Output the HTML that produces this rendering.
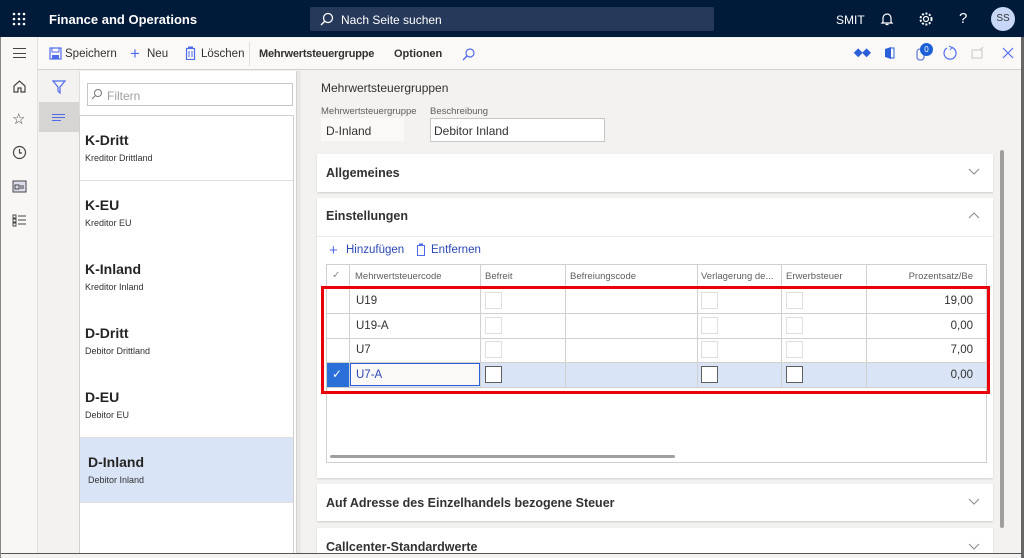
<!DOCTYPE html>
<html><head><meta charset="utf-8"><style>
*{box-sizing:border-box;margin:0;padding:0}
body{width:1024px;height:558px;overflow:hidden;font-family:"Liberation Sans",sans-serif;background:#f3f2f1;position:relative;color:#323130}
.a{position:absolute}
.top{left:0;top:0;width:1024px;height:37px;background:#001a3a}
.t{font-size:12px;white-space:nowrap}
.ab{font-size:11.5px;white-space:nowrap}
.card{background:#fff;box-shadow:0 1px 2px rgba(0,0,0,.15)}
.li{position:absolute;left:80px;width:213px;height:65px;border-bottom:1px solid #e1dfdd;background:#fff}
.li b{position:absolute;left:5px;top:16px;font-size:14px;font-weight:bold;color:#252423}
.li span{position:absolute;left:5px;top:37px;font-size:9px;color:#323130}
.cb{position:absolute;width:17px;height:17px;border:1px solid #e1dfdd;background:#fff}
.cb.s{border:1px solid #605e5c}
.hl{position:absolute;left:327px;width:659px;height:1px;background:#d2d0ce}
.vl{position:absolute;top:264px;width:1px;height:123px;background:#d2d0ce}
.g{font-size:11.5px;white-space:nowrap}
</style></head><body>
<div class="a top"></div>
<svg class="a" style="left:12px;top:12px" width="14" height="14"><g fill="#fff"><circle cx="2" cy="2" r="1.3"/><circle cx="7" cy="2" r="1.3"/><circle cx="12" cy="2" r="1.3"/><circle cx="2" cy="7" r="1.3"/><circle cx="7" cy="7" r="1.3"/><circle cx="12" cy="7" r="1.3"/><circle cx="2" cy="12" r="1.3"/><circle cx="7" cy="12" r="1.3"/><circle cx="12" cy="12" r="1.3"/></g></svg>
<div class="a t" style="left:49px;top:12px;color:#fff;font-weight:bold;font-size:13px">Finance and Operations</div>
<div class="a" style="left:310px;top:7px;width:404px;height:24px;background:#27395a;border-radius:2px"></div>
<svg class="a" style="left:320px;top:12px" width="14" height="14"><circle cx="8" cy="6" r="4.5" fill="none" stroke="#fff" stroke-width="1.3"/><path d="M5 9L1 13" stroke="#fff" stroke-width="1.4"/></svg>
<div class="a t" style="left:341px;top:13px;color:#fff">Nach Seite suchen</div>
<div class="a t" style="left:836px;top:13px;color:#fff">SMIT</div>
<svg class="a" style="left:880px;top:12px" width="14" height="14"><path d="M3 10V6a4 4 0 0 1 8 0v4l1 1H2z M5.5 12.5h3" fill="none" stroke="#fff" stroke-width="1.2"/></svg>
<svg class="a" style="left:918px;top:11px" width="16" height="16"><circle cx="8" cy="8" r="2.5" fill="none" stroke="#fff" stroke-width="1.2"/><circle cx="8" cy="8" r="5.5" fill="none" stroke="#fff" stroke-width="2" stroke-dasharray="2 1.6"/></svg>
<div class="a t" style="left:959px;top:10px;color:#fff;font-size:15px">?</div>
<div class="a" style="left:991px;top:7px;width:24px;height:24px;border-radius:50%;background:#c7d7f5;color:#333;font-size:10px;text-align:center;line-height:24px">SS</div>

<div class="a" style="left:0;top:37px;width:38px;height:521px;background:#f8f7f6;border-right:1px solid #e1dfdd"></div>
<div class="a" style="left:13px;top:48px;width:13px;height:10px;border-top:1.5px solid #444;border-bottom:1.5px solid #444"></div>
<div class="a" style="left:13px;top:52.5px;width:13px;height:1.5px;background:#444"></div>
<svg class="a" style="left:12px;top:79px" width="15" height="15"><path d="M2 7L7.5 2 13 7V13H9V9H6V13H2Z" fill="none" stroke="#444" stroke-width="1.2"/></svg>
<div class="a" style="left:12px;top:110px;font-size:15px;color:#444">☆</div>
<svg class="a" style="left:12px;top:145px" width="15" height="15"><circle cx="7.5" cy="7.5" r="6" fill="none" stroke="#444" stroke-width="1.2"/><path d="M7.5 4V8H10" fill="none" stroke="#444" stroke-width="1.2"/></svg>
<svg class="a" style="left:12px;top:180px" width="15" height="13"><rect x="1" y="1" width="13" height="11" fill="#dde" stroke="#444"/><rect x="3" y="5" width="4" height="4" fill="none" stroke="#444"/><path d="M8 6h4M8 8h4" stroke="#444"/></svg>
<svg class="a" style="left:12px;top:213px" width="15" height="14"><path d="M1 2h3v3H1zM1 6h3v3H1zM1 10h3v3H1z" fill="none" stroke="#444" stroke-width=".9"/><path d="M6 3h8M6 7h8M6 11h8" stroke="#444"/></svg>

<div class="a" style="left:38px;top:38px;width:986px;height:32px;background:#faf9f8;border-bottom:1px solid #d2d0ce"></div>
<svg class="a" style="left:49px;top:47px" width="13" height="13"><rect x="1" y="1" width="11" height="11" fill="none" stroke="#4f6bed" stroke-width="1.2"/><rect x="3" y="1" width="7" height="4" fill="none" stroke="#4f6bed"/><rect x="3" y="8" width="7" height="4" fill="#4f6bed"/></svg>
<div class="a ab" style="left:65px;top:48px">Speichern</div>
<div class="a t" style="left:130px;top:44px;color:#4f6bed;font-size:17px">+</div>
<div class="a ab" style="left:147px;top:48px">Neu</div>
<svg class="a" style="left:185px;top:46px" width="11" height="14"><rect x="1.5" y="2.5" width="8" height="11" fill="none" stroke="#4f6bed" stroke-width="1.2"/><rect x="3" y="0.5" width="5" height="2" fill="#4f6bed"/><path d="M4 5v6M7 5v6" stroke="#4f6bed"/></svg>
<div class="a ab" style="left:201px;top:48px">Löschen</div>
<div class="a" style="left:249px;top:42px;width:1px;height:24px;background:#e1dfdd"></div>
<div class="a ab" style="left:259px;top:48px;font-weight:bold;font-size:11px;letter-spacing:-0.2px">Mehrwertsteuergruppe</div>
<div class="a ab" style="left:394px;top:48px;font-weight:bold;font-size:11px">Optionen</div>
<svg class="a" style="left:462px;top:47px" width="14" height="14"><circle cx="8" cy="6" r="4" fill="none" stroke="#4f6bed" stroke-width="1.2"/><path d="M5 9L1 13" stroke="#4f6bed" stroke-width="1.3"/></svg>
<div class="a t" style="left:854px;top:45px;color:#2b5fd9;font-size:12px;font-weight:bold">⬥⬥</div>
<svg class="a" style="left:883px;top:46px" width="12" height="14"><path d="M2 3L8 1V13L2 11Z" fill="#2b5fd9"/><path d="M8 2h3v10H8" fill="none" stroke="#2b5fd9"/></svg>
<svg class="a" style="left:916px;top:46px" width="10" height="15"><rect x="1" y="3" width="7" height="11" rx="3" fill="none" stroke="#6a7fd8" stroke-width="1.3"/></svg>
<div class="a" style="left:920px;top:43px;width:13px;height:13px;border-radius:50%;background:#1a5fd6;color:#fff;font-size:8px;text-align:center;line-height:13px">0</div>
<svg class="a" style="left:942px;top:45px" width="16" height="16"><path d="M5 3A6 6 0 1 0 10 2.5" fill="none" stroke="#4f6bed" stroke-width="1.2"/><path d="M7 1L10 2.5 8 5" fill="none" stroke="#4f6bed"/></svg>
<svg class="a" style="left:971px;top:47px" width="14" height="12"><rect x="1" y="3" width="10" height="8" fill="none" stroke="#c8c6c4"/><path d="M9 3L12 0" stroke="#c8c6c4"/></svg>
<svg class="a" style="left:1002px;top:47px" width="12" height="12"><path d="M1 1L11 11M11 1L1 11" stroke="#4f6bed" stroke-width="1.2"/></svg>

<div class="a" style="left:39px;top:71px;width:40px;height:487px;background:#f3f2f1"></div>
<svg class="a" style="left:52px;top:80px" width="14" height="14"><path d="M1 1H13L8 7V13L6 11V7Z" fill="none" stroke="#4f6bed" stroke-width="1.2"/></svg>
<div class="a" style="left:39px;top:102px;width:40px;height:30px;background:#d6d5d4"></div>
<div class="a" style="left:52px;top:114px;width:13px;height:1.3px;background:#4f6bed"></div>
<div class="a" style="left:52px;top:117px;width:13px;height:1.3px;background:#4f6bed"></div>
<div class="a" style="left:52px;top:120px;width:9px;height:1.3px;background:#4f6bed"></div>

<div class="a" style="left:79px;top:71px;width:217px;height:487px;background:#fff;border-left:1px solid #e1dfdd"></div>
<div class="a" style="left:87px;top:83px;width:206px;height:23px;border:1px solid #c8c6c4;background:#fff"></div>
<svg class="a" style="left:91px;top:88px" width="12" height="12"><circle cx="7" cy="5" r="3.5" fill="none" stroke="#777"/><path d="M4.5 7.5L1 11" stroke="#777"/></svg>
<div class="a t" style="left:107px;top:89px;color:#a19f9d">Filtern</div>
<div class="a" style="left:79px;top:115px;width:215px;height:443px;border:1px solid #d2d0ce;border-bottom:none"></div>
<div class="li" style="top:116px"><b>K-Dritt</b><span>Kreditor Drittland</span></div>
<div class="li" style="top:181px"><b>K-EU</b><span>Kreditor EU</span></div>
<div class="li" style="top:245px"><b>K-Inland</b><span>Kreditor Inland</span></div>
<div class="li" style="top:309px"><b>D-Dritt</b><span>Debitor Drittland</span></div>
<div class="li" style="top:373px"><b>D-EU</b><span>Debitor EU</span></div>
<div class="li" style="top:438px;background:#dae4f7"><b style="left:8px">D-Inland</b><span style="left:8px">Debitor Inland</span></div>
<div class="a" style="left:296px;top:71px;width:5px;height:487px;background:#e8e7e6;border-left:1px solid #d2d0ce"></div>

<div class="a t" style="left:321px;top:81px">Mehrwertsteuergruppen</div>
<div class="a" style="left:321px;top:106px;font-size:9.5px;color:#605e5c">Mehrwertsteuergruppe</div>
<div class="a" style="left:430px;top:106px;font-size:9.5px;color:#605e5c">Beschreibung</div>
<div class="a" style="left:321px;top:118px;width:83px;height:23px;background:#faf9f8"></div>
<div class="a t" style="left:326px;top:124px">D-Inland</div>
<div class="a" style="left:430px;top:118px;width:175px;height:24px;border:1px solid #c8c6c4;background:#fff"></div>
<div class="a t" style="left:434px;top:124px">Debitor Inland</div>

<div class="a card" style="left:317px;top:154px;width:676px;height:38px"></div>
<div class="a t" style="left:326px;top:166px;font-weight:bold;font-size:12.5px">Allgemeines</div>
<svg class="a" style="left:968px;top:168px" width="12" height="8"><path d="M1 1L6 6 11 1" fill="none" stroke="#8a8886"/></svg>
<div class="a card" style="left:317px;top:198px;width:676px;height:280px"></div>
<div class="a t" style="left:326px;top:209px;font-weight:bold;font-size:12.5px">Einstellungen</div>
<svg class="a" style="left:968px;top:211px" width="12" height="8"><path d="M1 7L6 2 11 7" fill="none" stroke="#8a8886"/></svg>
<div class="a" style="left:317px;top:236px;width:676px;height:1px;background:#edebe9"></div>
<div class="a t" style="left:329px;top:242px;color:#4f6bed;font-size:15px">+</div>
<div class="a g" style="left:346px;top:244px;color:#2b48b5">Hinzufügen</div>
<svg class="a" style="left:416px;top:243px" width="10" height="13"><rect x="1.5" y="2.5" width="7" height="10" fill="none" stroke="#4f6bed"/><rect x="3" y=".5" width="4" height="2" fill="#4f6bed"/></svg>
<div class="a g" style="left:431px;top:244px;color:#2b48b5">Entfernen</div>

<div class="a" style="left:326px;top:264px;width:661px;height:199px;border:1px solid #d2d0ce;background:#fff"></div>
<div class="a" style="left:327px;top:362px;width:659px;height:25px;background:#dae4f7"></div>
<div class="a" style="left:327px;top:362px;width:22px;height:25px;background:#2b6fd9"></div>
<div class="a" style="left:350px;top:363px;width:130px;height:23px;border:1px solid #2b5fd9;background:#faf9f8"></div>
<div class="hl" style="top:288px"></div><div class="hl" style="top:313px"></div><div class="hl" style="top:338px"></div><div class="hl" style="top:362px"></div><div class="hl" style="top:387px"></div>
<div class="vl" style="left:349px"></div><div class="vl" style="left:480px"></div><div class="vl" style="left:565px"></div><div class="vl" style="left:697px"></div><div class="vl" style="left:781px"></div><div class="vl" style="left:866px"></div>
<div class="a" style="left:332px;top:270px;font-size:10px;color:#8a8886">✓</div>
<div class="a" style="left:332px;top:367px;font-size:12px;color:#fff">✓</div>
<div class="a" style="left:355px;top:271px;font-size:9.5px;color:#605e5c">Mehrwertsteuercode</div>
<div class="a" style="left:485px;top:271px;font-size:9.5px;color:#605e5c">Befreit</div>
<div class="a" style="left:570px;top:271px;font-size:9.5px;color:#605e5c">Befreiungscode</div>
<div class="a" style="left:701px;top:271px;font-size:9.5px;color:#605e5c">Verlagerung de...</div>
<div class="a" style="left:786px;top:271px;font-size:9.5px;color:#605e5c">Erwerbsteuer</div>
<div class="a" style="left:870px;top:271px;width:103px;text-align:right;font-size:9.5px;color:#605e5c">Prozentsatz/Be</div>
<div class="a g" style="left:356px;top:295px">U19</div>
<div class="a g" style="left:356px;top:320px">U19-A</div>
<div class="a g" style="left:356px;top:344px">U7</div>
<div class="a g" style="left:356px;top:369px;color:#2b48b5">U7-A</div>
<div class="a g" style="left:870px;top:295px;width:103px;text-align:right">19,00</div>
<div class="a g" style="left:870px;top:320px;width:103px;text-align:right">0,00</div>
<div class="a g" style="left:870px;top:344px;width:103px;text-align:right">7,00</div>
<div class="a g" style="left:870px;top:369px;width:103px;text-align:right">0,00</div>
<div class="cb" style="left:485px;top:292px"></div><div class="cb" style="left:701px;top:292px"></div><div class="cb" style="left:786px;top:292px"></div>
<div class="cb" style="left:485px;top:317px"></div><div class="cb" style="left:701px;top:317px"></div><div class="cb" style="left:786px;top:317px"></div>
<div class="cb" style="left:485px;top:341px"></div><div class="cb" style="left:701px;top:341px"></div><div class="cb" style="left:786px;top:341px"></div>
<div class="cb s" style="left:485px;top:366px"></div><div class="cb s" style="left:701px;top:366px"></div><div class="cb s" style="left:786px;top:366px"></div>
<div class="a" style="left:330px;top:455px;width:345px;height:3px;background:#a19f9d;border-radius:2px"></div>
<div class="a" style="left:321px;top:286px;width:669px;height:108px;border:3px solid #e8000b"></div>

<div class="a card" style="left:317px;top:484px;width:676px;height:37px"></div>
<div class="a t" style="left:326px;top:496px;font-weight:bold;font-size:12.5px">Auf Adresse des Einzelhandels bezogene Steuer</div>
<svg class="a" style="left:968px;top:498px" width="12" height="8"><path d="M1 1L6 6 11 1" fill="none" stroke="#8a8886"/></svg>
<div class="a card" style="left:317px;top:528px;width:676px;height:30px"></div>
<div class="a t" style="left:326px;top:540px;font-weight:bold;font-size:12.5px">Callcenter-Standardwerte</div>
<svg class="a" style="left:968px;top:543px" width="12" height="8"><path d="M1 1L6 6 11 1" fill="none" stroke="#8a8886"/></svg>
<div class="a" style="left:1000px;top:150px;width:4px;height:378px;background:#a19f9d;border-radius:2px"></div>
<div class="a" style="left:0;top:553px;width:1024px;height:5px;background:#f3f2f1;border-top:1px solid #555"></div>
<div class="a" style="left:1021px;top:37px;width:3px;height:521px;background:#666"></div>
<div class="a" style="left:0;top:37px;width:1px;height:521px;background:#888"></div>
</body></html>
